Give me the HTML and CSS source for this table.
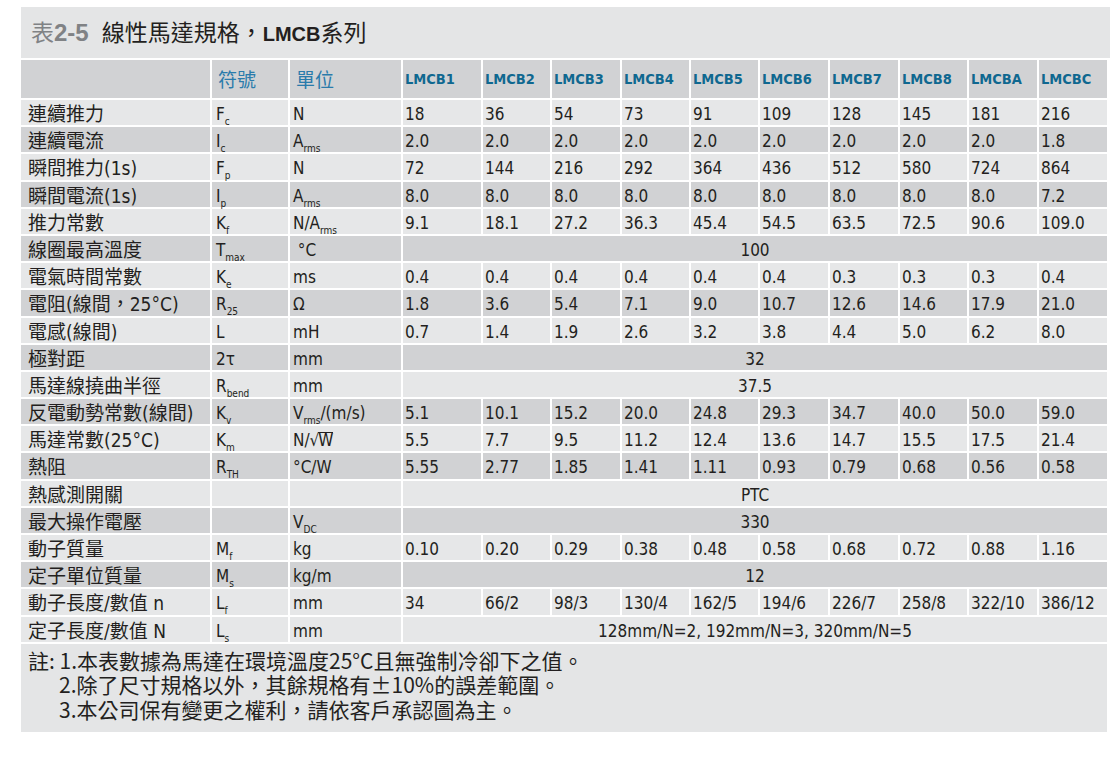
FILE: index.html
```html
<!DOCTYPE html>
<html lang="zh-Hant">
<head>
<meta charset="utf-8">
<title>表2-5 線性馬達規格，LMCB系列</title>
<link rel="stylesheet" href="styles.css">
</head>
<body>
<div class="panel">
  <div class="title"><span class="t-no">表<b>2-5</b></span><span class="t-main">線性馬達規格，<b>LMCB</b>系列</span></div>
  <div class="spec">
    <div class="row hd"><div class="lb"></div><div class="sy">符號</div><div class="un">單位</div><div class="m">LMCB1</div><div class="m">LMCB2</div><div class="m">LMCB3</div><div class="m">LMCB4</div><div class="m">LMCB5</div><div class="m">LMCB6</div><div class="m">LMCB7</div><div class="m">LMCB8</div><div class="m">LMCBA</div><div class="m">LMCBC</div></div>
    <div class="row lt"><div class="lb">連續推力</div><div class="sy">F<sub>c</sub></div><div class="un">N</div><div>18</div><div>36</div><div>54</div><div>73</div><div>91</div><div>109</div><div>128</div><div>145</div><div>181</div><div>216</div></div>
    <div class="row dk"><div class="lb">連續電流</div><div class="sy">I<sub>c</sub></div><div class="un">A<sub>rms</sub></div><div>2.0</div><div>2.0</div><div>2.0</div><div>2.0</div><div>2.0</div><div>2.0</div><div>2.0</div><div>2.0</div><div>2.0</div><div>1.8</div></div>
    <div class="row lt"><div class="lb">瞬間推力(1s)</div><div class="sy">F<sub>p</sub></div><div class="un">N</div><div>72</div><div>144</div><div>216</div><div>292</div><div>364</div><div>436</div><div>512</div><div>580</div><div>724</div><div>864</div></div>
    <div class="row dk"><div class="lb">瞬間電流(1s)</div><div class="sy">I<sub>p</sub></div><div class="un">A<sub>rms</sub></div><div>8.0</div><div>8.0</div><div>8.0</div><div>8.0</div><div>8.0</div><div>8.0</div><div>8.0</div><div>8.0</div><div>8.0</div><div>7.2</div></div>
    <div class="row lt"><div class="lb">推力常數</div><div class="sy">K<sub>f</sub></div><div class="un">N/A<sub>rms</sub></div><div>9.1</div><div>18.1</div><div>27.2</div><div>36.3</div><div>45.4</div><div>54.5</div><div>63.5</div><div>72.5</div><div>90.6</div><div>109.0</div></div>
    <div class="row dk"><div class="lb">線圈最高溫度</div><div class="sy">T<sub>max</sub></div><div class="un">&nbsp;°C</div><div class="span">100</div></div>
    <div class="row lt"><div class="lb">電氣時間常數</div><div class="sy">K<sub>e</sub></div><div class="un">ms</div><div>0.4</div><div>0.4</div><div>0.4</div><div>0.4</div><div>0.4</div><div>0.4</div><div>0.3</div><div>0.3</div><div>0.3</div><div>0.4</div></div>
    <div class="row dk"><div class="lb">電阻(線間，25°C)</div><div class="sy">R<sub>25</sub></div><div class="un">Ω</div><div>1.8</div><div>3.6</div><div>5.4</div><div>7.1</div><div>9.0</div><div>10.7</div><div>12.6</div><div>14.6</div><div>17.9</div><div>21.0</div></div>
    <div class="row lt"><div class="lb">電感(線間)</div><div class="sy">L</div><div class="un">mH</div><div>0.7</div><div>1.4</div><div>1.9</div><div>2.6</div><div>3.2</div><div>3.8</div><div>4.4</div><div>5.0</div><div>6.2</div><div>8.0</div></div>
    <div class="row dk"><div class="lb">極對距</div><div class="sy">2τ</div><div class="un">mm</div><div class="span">32</div></div>
    <div class="row lt"><div class="lb">馬達線撓曲半徑</div><div class="sy">R<sub>bend</sub></div><div class="un">mm</div><div class="span">37.5</div></div>
    <div class="row dk"><div class="lb">反電動勢常數(線間)</div><div class="sy">K<sub>v</sub></div><div class="un">V<sub>rms</sub>/(m/s)</div><div>5.1</div><div>10.1</div><div>15.2</div><div>20.0</div><div>24.8</div><div>29.3</div><div>34.7</div><div>40.0</div><div>50.0</div><div>59.0</div></div>
    <div class="row lt"><div class="lb">馬達常數(25°C)</div><div class="sy">K<sub>m</sub></div><div class="un">N/√<span class="ovl">W</span></div><div>5.5</div><div>7.7</div><div>9.5</div><div>11.2</div><div>12.4</div><div>13.6</div><div>14.7</div><div>15.5</div><div>17.5</div><div>21.4</div></div>
    <div class="row dk"><div class="lb">熱阻</div><div class="sy">R<sub>TH</sub></div><div class="un">°C/W</div><div>5.55</div><div>2.77</div><div>1.85</div><div>1.41</div><div>1.11</div><div>0.93</div><div>0.79</div><div>0.68</div><div>0.56</div><div>0.58</div></div>
    <div class="row lt"><div class="lb">熱感測開關</div><div class="sy"></div><div class="un"></div><div class="span">PTC</div></div>
    <div class="row dk"><div class="lb">最大操作電壓</div><div class="sy"></div><div class="un">V<sub>DC</sub></div><div class="span">330</div></div>
    <div class="row lt"><div class="lb">動子質量</div><div class="sy">M<sub>f</sub></div><div class="un">kg</div><div>0.10</div><div>0.20</div><div>0.29</div><div>0.38</div><div>0.48</div><div>0.58</div><div>0.68</div><div>0.72</div><div>0.88</div><div>1.16</div></div>
    <div class="row dk"><div class="lb">定子單位質量</div><div class="sy">M<sub>s</sub></div><div class="un">kg/m</div><div class="span">12</div></div>
    <div class="row lt"><div class="lb">動子長度/數值 n</div><div class="sy">L<sub>f</sub></div><div class="un">mm</div><div>34</div><div>66/2</div><div>98/3</div><div>130/4</div><div>162/5</div><div>194/6</div><div>226/7</div><div>258/8</div><div>322/10</div><div>386/12</div></div>
    <div class="row lt"><div class="lb">定子長度/數值 N</div><div class="sy">L<sub>s</sub></div><div class="un">mm</div><div class="span">128mm/N=2, 192mm/N=3, 320mm/N=5</div></div>
  </div>
  <div class="notes">
    <p>註: 1.本表數據為馬達在環境溫度25°C且無強制冷卻下之值。</p>
    <p class="ind">2.除了尺寸規格以外，其餘規格有±10%的誤差範圍。</p>
    <p class="ind">3.本公司保有變更之權利，請依客戶承認圖為主。</p>
  </div>
</div>
</body>
</html>
```

FILE: styles.css
```css
html, body {
  margin: 0;
  padding: 0;
  background: #ffffff;
}

body {
  font-family: "DejaVu Sans Condensed", "Noto Sans CJK TC", sans-serif;
  color: #231f20;
}

.panel {
  margin: 7px 0 0 21px;
  width: 1089px;
}

.title {
  height: 51px;
  box-sizing: border-box;
  padding: 0 0 4px 10px;
  background: #e4e5e6;
  display: flex;
  align-items: center;
  font-family: "Liberation Sans", "Noto Sans CJK TC", sans-serif;
  font-size: 23px;
}

.t-no {
  color: #808285;
  margin-right: 13px;
}

.t-no b {
  font-weight: 700;
  font-size: 24px;
}

.t-main b {
  font-weight: 700;
  font-size: 20px;
}

.spec {
  margin-top: 2px;
  width: 1086px;
  display: grid;
  grid-template-columns: 189px 76px 111px 78px 67px 68px 67px 67px 68px 68px 67px 68px 68px;
  grid-template-rows: 38px;
  grid-auto-rows: 25.2px;
  gap: 2px;
  background: #ffffff;
}

.row {
  display: contents;
}

.row > div {
  display: block;
  padding: 3px 0 0 2px;
  font-size: 17px;
  line-height: 22.2px;
  white-space: nowrap;
  overflow: visible;
  background: #e6e7e8;
}

.row.dk > div,
.row.hd > div {
  background: #d1d2d4;
}

.row.hd > div {
  padding-top: 0;
  line-height: 38px;
}

.row > .lb {
  padding-left: 7px;
  font-size: 19px;
}

.row > .sy {
  padding-left: 4px;
}

.row > .un {
  padding-left: 3px;
}

.row > .span {
  grid-column: span 10;
  text-align: center;
  padding-left: 0;
}

.row.hd > .sy,
.row.hd > .un {
  font-family: "Noto Sans CJK TC", sans-serif;
  font-size: 19px;
  color: #2a7bab;
  padding-left: 6px;
}

.row.hd > .m {
  font-weight: 700;
  font-size: 14.5px;
  color: #0f6890;
}

sub {
  font-size: 10px;
  vertical-align: -5px;
  line-height: 0;
}

.ovl {
  display: inline-block;
  border-top: 1px solid #231f20;
  line-height: 15px;
  margin-left: -1px;
}

.notes {
  margin-top: 2px;
  width: 1086px;
  height: 88px;
  box-sizing: border-box;
  padding: 4px 0 0 7px;
  background: #e4e5e6;
  font-family: "Noto Sans CJK TC", sans-serif;
  font-size: 21px;
  line-height: 24.5px;
}

.notes p {
  margin: 0;
}

.notes .ind {
  padding-left: 31px;
}
```
